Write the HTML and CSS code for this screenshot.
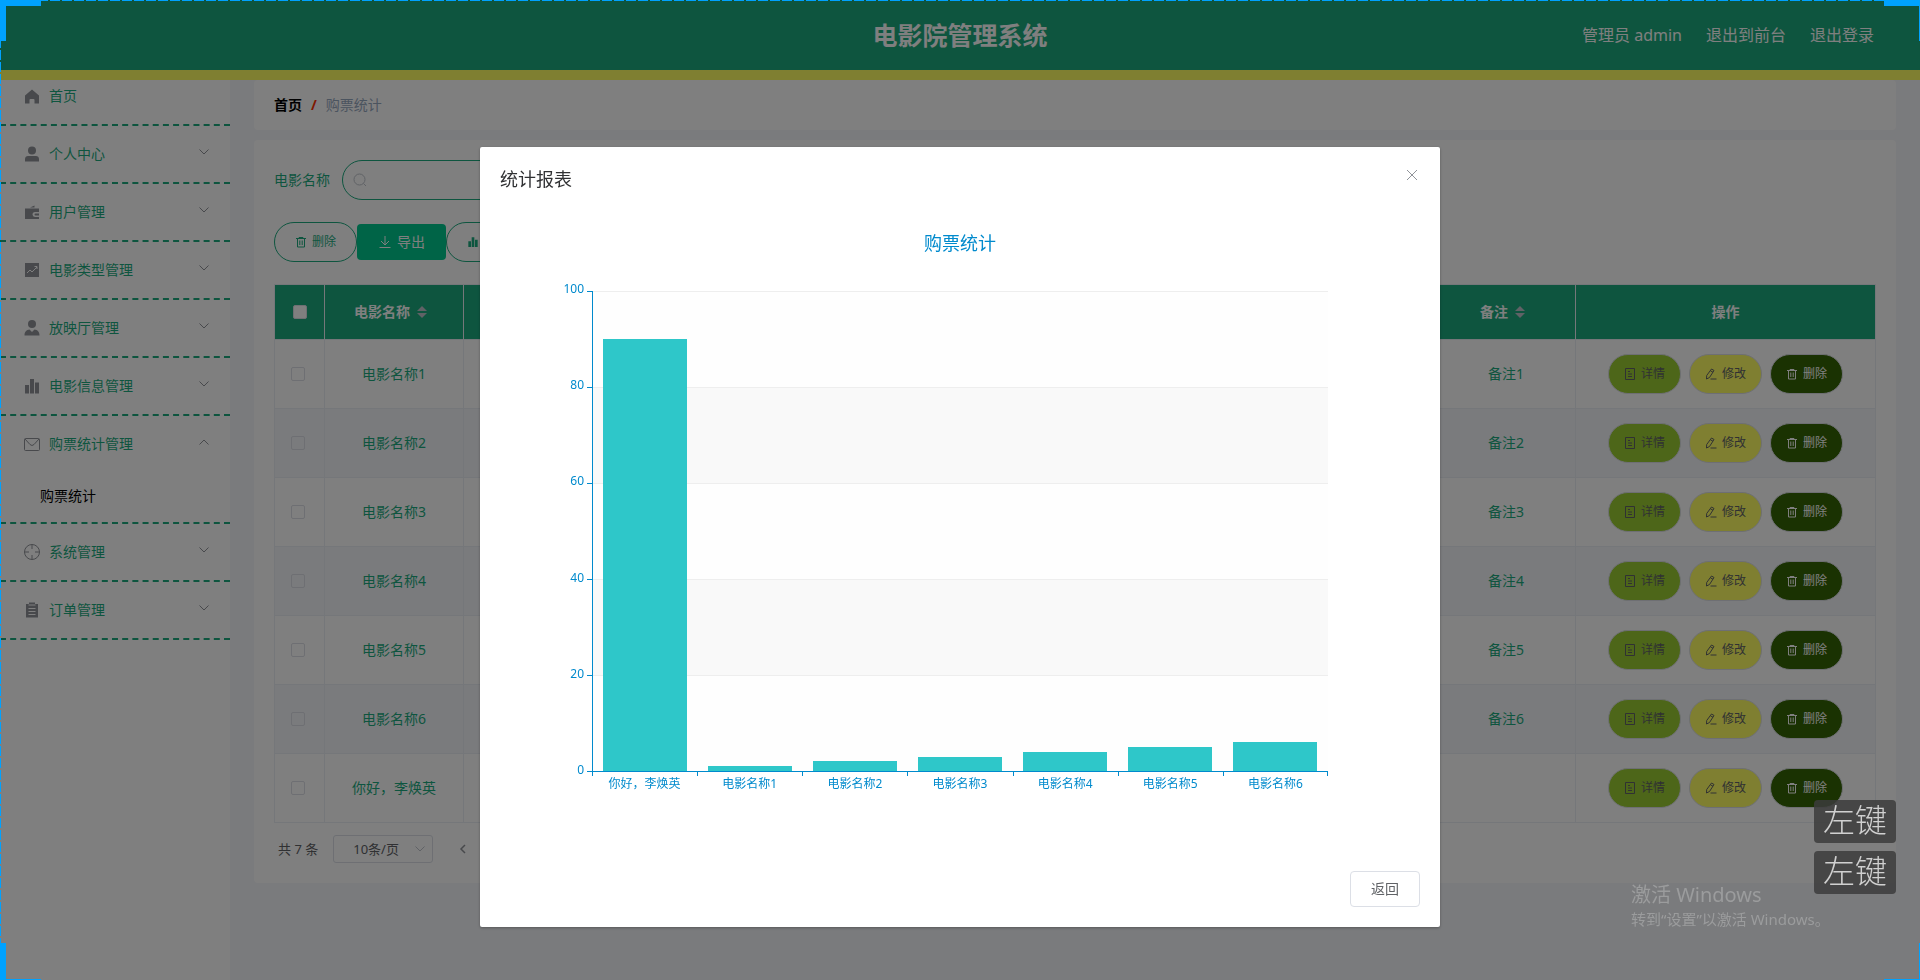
FILE: index.html
```html
<!DOCTYPE html>
<html lang="zh-CN">
<head>
<meta charset="utf-8">
<title>电影院管理系统</title>
<link rel="stylesheet" href="styles.css">
</head>
<body>
<svg class="sprite" aria-hidden="true">
  <symbol id="home" viewBox="0 0 18 18"><path d="M9 2.500 16 8.500v8h-4.500V13a1 1 0 0 0-1-1h-3a1 1 0 0 0-1 1v3.500H2v-8Z" fill="currentColor"/></symbol>
  <symbol id="user" viewBox="0 0 18 18"><circle cx="9" cy="5.500" r="4" fill="currentColor"/><path d="M2 16.500V14c0-2 1.300-3 3-3h8c1.700 0 3 1 3 3v2.500Z" fill="currentColor"/></symbol>
  <symbol id="wallet" viewBox="0 0 18 18"><path d="M7 4.500 11.500 2.500v2ZM2 5.500h14v3.500h-4a2.400 2.400 0 0 0 0 5h4v2H2Z" fill="currentColor"/><path d="M12.500 10.500H16v2h-3.500a1 1 0 0 1 0-2" fill="currentColor"/></symbol>
  <symbol id="trend" viewBox="0 0 18 18"><path d="M2 2h14v14H2Z" fill="currentColor"/><path d="m4 12 3-3 2 2 5-5M11.500 5.500h2.500V8" fill="none" stroke="#ffffff"/></symbol>
  <symbol id="person" viewBox="0 0 18 18"><circle cx="9" cy="5" r="4" fill="currentColor"/><path d="M1.500 16.500c0-4 2-5.500 5-6L9 13l2.500-2.500c3 .5 5 2 5 6Z" fill="currentColor"/></symbol>
  <symbol id="bars" viewBox="0 0 18 18"><path d="M2 8h4v8.500H2ZM7 2h4v14.500H7ZM12 5.500h4v11h-4Z" fill="currentColor"/></symbol>
  <symbol id="mail" viewBox="0 0 18 18"><rect x="1.500" y="3.500" width="15" height="12" rx="1" fill="none" stroke="currentColor"/><path d="M2 4l5 5.500a2.800 2.800 0 0 0 4 0L16 4" fill="none" stroke="currentColor"/></symbol>
  <symbol id="aim" viewBox="0 0 18 18"><circle cx="9" cy="9" r="7.500" fill="none" stroke="currentColor"/><path d="M9 1.500V6M9 12v4.500M1.500 9H6M12 9h4.500" stroke="currentColor"/></symbol>
  <symbol id="order" viewBox="0 0 18 18"><path d="M3 3h3V1.500h6V3h3v13.500H3Z" fill="currentColor"/><path d="M5.500 4h7M5.500 7.500h7M5.500 10.500h7M5.500 13.500h7" stroke="#ffffff"/></symbol>
  <symbol id="down" viewBox="0 0 12 12"><path d="m1.500 3.500 4.500 4.500 4.500-4.500" fill="none" stroke="currentColor"/></symbol>
  <symbol id="up" viewBox="0 0 12 12"><path d="m1.500 8.500 4.500-4.500 4.500 4.500" fill="none" stroke="currentColor"/></symbol>
  <symbol id="left" viewBox="0 0 12 12"><path d="M8 2 4 6l4 4" fill="none" stroke="currentColor" stroke-width="1.500"/></symbol>
  <symbol id="search" viewBox="0 0 14 14"><circle cx="6.500" cy="6.500" r="5.500" fill="none" stroke="currentColor"/><path d="m10.500 10.500 2.500 2.500" stroke="currentColor"/></symbol>
  <symbol id="trash" viewBox="0 0 12 12"><path d="M1 2.500h10M4 2.500v-1h4v1M2.500 2.500v8.500h7V2.500M4.800 4.500v4.500M7.200 4.500v4.500" fill="none" stroke="currentColor"/></symbol>
  <symbol id="download" viewBox="0 0 14 14"><path d="M7 1v9M3 6l4 4 4-4M1.500 12.500h11" fill="none" stroke="currentColor"/></symbol>
  <symbol id="doc" viewBox="0 0 12 12"><path d="M1.500 .5h9v11h-9ZM4 3.500h2M4 6h4M4 8.500h4" fill="none" stroke="currentColor"/></symbol>
  <symbol id="edit" viewBox="0 0 12 12"><path d="M6.500 1 9 2.500 4.500 9.500l-3 1.500 .2-3.500ZM5.500 2.800l2.500 1.500M5.500 11h6" fill="none" stroke="currentColor"/></symbol>
  <symbol id="close" viewBox="0 0 16 16"><path d="m3 3 10 10M13 3 3 13" stroke="currentColor"/></symbol>
</svg>

<header class="topbar">
  <h1 class="topbar-title">电影院管理系统</h1>
  <nav class="topbar-links">
    <span>管理员 admin</span>
    <a href="#">退出到前台</a>
    <a href="#">退出登录</a>
  </nav>
</header>

<div class="layout">
  <aside class="sidebar">
    <ul class="menu">
      <li class="menu-item"><a class="menu-link" href="#"><svg class="menu-icon"><use href="#home"/></svg>首页</a></li>
      <li class="menu-item"><a class="menu-link" href="#"><svg class="menu-icon"><use href="#user"/></svg>个人中心<svg class="menu-arrow"><use href="#down"/></svg></a></li>
      <li class="menu-item"><a class="menu-link" href="#"><svg class="menu-icon"><use href="#wallet"/></svg>用户管理<svg class="menu-arrow"><use href="#down"/></svg></a></li>
      <li class="menu-item"><a class="menu-link" href="#"><svg class="menu-icon"><use href="#trend"/></svg>电影类型管理<svg class="menu-arrow"><use href="#down"/></svg></a></li>
      <li class="menu-item"><a class="menu-link" href="#"><svg class="menu-icon"><use href="#person"/></svg>放映厅管理<svg class="menu-arrow"><use href="#down"/></svg></a></li>
      <li class="menu-item"><a class="menu-link" href="#"><svg class="menu-icon"><use href="#bars"/></svg>电影信息管理<svg class="menu-arrow"><use href="#down"/></svg></a></li>
      <li class="menu-item"><a class="menu-link" href="#"><svg class="menu-icon"><use href="#mail"/></svg>购票统计管理<svg class="menu-arrow"><use href="#up"/></svg></a><a class="submenu-link" href="#">购票统计</a></li>
      <li class="menu-item"><a class="menu-link" href="#"><svg class="menu-icon"><use href="#aim"/></svg>系统管理<svg class="menu-arrow"><use href="#down"/></svg></a></li>
      <li class="menu-item"><a class="menu-link" href="#"><svg class="menu-icon"><use href="#order"/></svg>订单管理<svg class="menu-arrow"><use href="#down"/></svg></a></li>
    </ul>
  </aside>

  <main class="main">
    <nav class="card breadcrumb"><a class="crumb-home" href="#">首页</a><span class="crumb-sep">/</span><span class="crumb-current">购票统计</span></nav>
    <section class="card content">
      <div class="search">
        <label for="film-name">电影名称</label>
        <span class="search-box"><svg class="icon-14"><use href="#search"/></svg><input id="film-name" type="text"></span>
      </div>
      <div class="toolbar">
        <button class="pill pill-outline" type="button"><svg class="icon-12"><use href="#trash"/></svg>删除</button>
        <button class="export" type="button"><svg class="icon-14"><use href="#download"/></svg>导出</button>
        <button class="pill pill-outline pill-chart" type="button" aria-label="报表"><svg class="icon-12"><use href="#bars"/></svg></button>
      </div>
      <table class="grid">
        <colgroup><col class="col-check"><col><col span="7"><col><col class="col-actions"></colgroup>
        <thead>
          <tr><th><input type="checkbox" aria-label="全选"></th><th><span class="sortable">电影名称<span class="carets"></span></span></th><th colspan="7"></th><th><span class="sortable">备注<span class="carets"></span></span></th><th>操作</th></tr>
        </thead>
        <tbody>
          <tr><td><input type="checkbox" aria-label="选择电影名称1"></td><td>电影名称1</td><td colspan="7"></td><td>备注1</td><td><div class="actions"><button class="pill pill-view" type="button"><svg class="icon-12"><use href="#doc"/></svg>详情</button><button class="pill pill-edit" type="button"><svg class="icon-12"><use href="#edit"/></svg>修改</button><button class="pill pill-delete" type="button"><svg class="icon-12"><use href="#trash"/></svg>删除</button></div></td></tr>
          <tr><td><input type="checkbox" aria-label="选择电影名称2"></td><td>电影名称2</td><td colspan="7"></td><td>备注2</td><td><div class="actions"><button class="pill pill-view" type="button"><svg class="icon-12"><use href="#doc"/></svg>详情</button><button class="pill pill-edit" type="button"><svg class="icon-12"><use href="#edit"/></svg>修改</button><button class="pill pill-delete" type="button"><svg class="icon-12"><use href="#trash"/></svg>删除</button></div></td></tr>
          <tr><td><input type="checkbox" aria-label="选择电影名称3"></td><td>电影名称3</td><td colspan="7"></td><td>备注3</td><td><div class="actions"><button class="pill pill-view" type="button"><svg class="icon-12"><use href="#doc"/></svg>详情</button><button class="pill pill-edit" type="button"><svg class="icon-12"><use href="#edit"/></svg>修改</button><button class="pill pill-delete" type="button"><svg class="icon-12"><use href="#trash"/></svg>删除</button></div></td></tr>
          <tr><td><input type="checkbox" aria-label="选择电影名称4"></td><td>电影名称4</td><td colspan="7"></td><td>备注4</td><td><div class="actions"><button class="pill pill-view" type="button"><svg class="icon-12"><use href="#doc"/></svg>详情</button><button class="pill pill-edit" type="button"><svg class="icon-12"><use href="#edit"/></svg>修改</button><button class="pill pill-delete" type="button"><svg class="icon-12"><use href="#trash"/></svg>删除</button></div></td></tr>
          <tr><td><input type="checkbox" aria-label="选择电影名称5"></td><td>电影名称5</td><td colspan="7"></td><td>备注5</td><td><div class="actions"><button class="pill pill-view" type="button"><svg class="icon-12"><use href="#doc"/></svg>详情</button><button class="pill pill-edit" type="button"><svg class="icon-12"><use href="#edit"/></svg>修改</button><button class="pill pill-delete" type="button"><svg class="icon-12"><use href="#trash"/></svg>删除</button></div></td></tr>
          <tr><td><input type="checkbox" aria-label="选择电影名称6"></td><td>电影名称6</td><td colspan="7"></td><td>备注6</td><td><div class="actions"><button class="pill pill-view" type="button"><svg class="icon-12"><use href="#doc"/></svg>详情</button><button class="pill pill-edit" type="button"><svg class="icon-12"><use href="#edit"/></svg>修改</button><button class="pill pill-delete" type="button"><svg class="icon-12"><use href="#trash"/></svg>删除</button></div></td></tr>
          <tr><td><input type="checkbox" aria-label="选择你好，李焕英"></td><td>你好，李焕英</td><td colspan="7"></td><td></td><td><div class="actions"><button class="pill pill-view" type="button"><svg class="icon-12"><use href="#doc"/></svg>详情</button><button class="pill pill-edit" type="button"><svg class="icon-12"><use href="#edit"/></svg>修改</button><button class="pill pill-delete" type="button"><svg class="icon-12"><use href="#trash"/></svg>删除</button></div></td></tr>
        </tbody>
      </table>
      <div class="pagination">
        <span>共 7 条</span>
        <span class="page-size"><select aria-label="每页条数"><option>10条/页</option></select><svg class="icon-12"><use href="#down"/></svg></span>
        <button class="page-prev" type="button" aria-label="上一页"><svg class="icon-12"><use href="#left"/></svg></button>
      </div>
    </section>
  </main>
</div>

<div class="overlay">
  <section class="dialog" role="dialog" aria-labelledby="dialog-title">
    <header class="dialog-header">
      <h2 class="dialog-title" id="dialog-title">统计报表</h2>
      <button class="dialog-close" type="button" aria-label="关闭"><svg class="icon-16"><use href="#close"/></svg></button>
    </header>
    <div class="dialog-body">
      <div class="chart">
        <h3 class="chart-title">购票统计</h3>
        <ol class="y-axis"><li>100</li><li>80</li><li>60</li><li>40</li><li>20</li><li>0</li></ol>
        <div class="plot">
          <div class="bar" style="height:90%"></div>
          <div class="bar" style="height:1%"></div>
          <div class="bar" style="height:2%"></div>
          <div class="bar" style="height:3%"></div>
          <div class="bar" style="height:4%"></div>
          <div class="bar" style="height:5%"></div>
          <div class="bar" style="height:6%"></div>
        </div>
        <ol class="x-axis"><li>你好，李焕英</li><li>电影名称1</li><li>电影名称2</li><li>电影名称3</li><li>电影名称4</li><li>电影名称5</li><li>电影名称6</li></ol>
      </div>
    </div>
    <footer class="dialog-footer"><button class="back" type="button">返回</button></footer>
  </section>
</div>

<div class="watermark"><p class="watermark-title">激活 Windows</p><p class="watermark-text">转到“设置”以激活 Windows。</p></div>
<div class="keys"><span class="key">左键</span><span class="key">左键</span></div>
<div class="frame frame-top"></div>
<div class="frame frame-left"></div>
<div class="frame corner-tl"></div>
<div class="frame corner-tr"></div>
<div class="frame corner-bl"></div>
<div class="frame corner-br"></div>
</body>
</html>
```
FILE: styles.css
```css
:root {
  --green: #1cab7f;
  --line: #ebeef5;
  --axis: #008acd;
  --frame: #00a2ff;
}

* { box-sizing: border-box; }

body {
  margin: 0;
  height: 100vh;
  overflow: hidden;
  display: flex;
  flex-direction: column;
  background: #f5f7fa;
  color: #606266;
  font: 14px/20px "Noto Sans", "Noto Sans CJK SC", sans-serif;
}

h1, h2, h3, p, ul, ol { margin: 0; padding: 0; list-style: none; font-weight: 400; }
a { color: inherit; text-decoration: none; }
button, input, select { font: inherit; color: inherit; }
svg { flex: none; }
.sprite { position: absolute; width: 0; height: 0; }
.icon-12 { width: 12px; height: 12px; }
.icon-14 { width: 14px; height: 14px; }
.icon-16 { width: 16px; height: 16px; display: block; }

/* top bar */
.topbar {
  position: relative;
  z-index: 1;
  display: grid;
  grid-template-columns: 1fr auto 1fr;
  align-items: center;
  height: 80px;
  padding: 0 46px;
  background: var(--green);
  border-bottom: 10px solid #ffff63;
  color: #ffffff;
}
.topbar-title { grid-column: 2; font-size: 25px; line-height: 36px; font-weight: 700; }
.topbar-links { display: flex; justify-content: flex-end; gap: 24px; font-size: 16px; }

/* sidebar */
.layout { flex: 1; display: flex; min-height: 0; }
.sidebar { flex: none; width: 230px; background: #ffffff; }
.menu { margin-top: -12px; }
.menu-item { border-bottom: 2px dashed var(--green); color: var(--green); }
.menu-link { display: flex; align-items: center; height: 56px; padding: 0 20px; }
.menu-icon { width: 18px; height: 18px; margin: 0 8px 0 3px; color: #909399; }
.menu-arrow { width: 12px; height: 12px; margin: 0 0 4px auto; color: #909399; }
.submenu-link { display: block; padding: 0 40px; height: 50px; line-height: 48px; color: #000000; }

/* cards */
.main { flex: 1; min-width: 0; padding: 0 24px; }
.card { background: #ffffff; border-radius: 4px; padding: 20px; }
.breadcrumb { display: flex; align-items: center; gap: 9px; height: 50px; margin-bottom: 10px; }
.crumb-home { color: #000000; font-weight: 700; }
.crumb-sep { color: #ff3300; font-weight: 700; }
.crumb-current { color: #97a8be; }

.search { display: flex; align-items: center; gap: 12px; color: var(--green); }
.search-box {
  display: flex; align-items: center; gap: 8px;
  width: 200px; height: 40px; padding: 0 10px;
  border: 1px solid var(--green); border-radius: 20px; color: #c0c4cc;
}
.search-box input { flex: 1; min-width: 0; border: 0; outline: 0; background: none; }

.toolbar { display: flex; align-items: center; margin: 22px 0; }
.pill {
  display: inline-flex; align-items: center; gap: 5px;
  height: 40px; padding: 0 15px;
  border: 1px solid #dcdfe6; border-radius: 20px;
  font-size: 12px; line-height: 16px;
}
.pill-outline { padding: 0 20px; background: #ffffff; border-color: var(--green); color: var(--green); }
.pill-chart { width: 83px; }
.pill-view { background: #9acd32; color: #606266; }
.pill-edit { background: #ffff63; color: #606266; }
.pill-delete { background: #356405; color: #ffffff; }
.export {
  display: inline-flex; align-items: center; gap: 5px;
  height: 36px; padding: 0 21px;
  border: 0; border-radius: 4px; background: #00c88f; color: #ffffff;
}

/* table */
.grid {
  width: 100%;
  table-layout: fixed;
  border-collapse: separate;
  border-spacing: 0;
  border: 1px solid var(--line);
  border-width: 1px 0 0 1px;
  color: var(--green);
  text-align: center;
}
.col-check { width: 50px; }
.col-actions { width: 300px; }
.grid th, .grid td { padding: 0; border: 1px solid var(--line); border-width: 0 1px 1px 0; }
.grid th { height: 55px; background: var(--green); color: #ffffff; font-weight: 700; }
.grid td { height: 69px; }
.grid tbody tr:nth-child(even) { background: #f5f7fa; }
.grid input {
  appearance: none;
  display: block;
  width: 14px; height: 14px; margin: 0 auto;
  border: 1px solid #dcdfe6; border-radius: 2px; background: #ffffff;
}
.grid td input { margin-left: 16px; background: none; }
.sortable { display: inline-flex; align-items: center; gap: 7px; padding-right: 7px; }
.carets { display: grid; gap: 2px; }
.carets::before, .carets::after { content: ""; border: 5px solid transparent; }
.carets::before { border-top: 0; border-bottom-color: #c0c4cc; }
.carets::after { border-bottom: 0; border-top-color: #c0c4cc; }
.actions { display: flex; justify-content: center; gap: 8px; }

.pagination { display: flex; align-items: center; gap: 15px; margin-top: 12px; padding-left: 4px; font-size: 13px; }
.page-size { display: flex; align-items: center; width: 100px; height: 28px; border: 1px solid #dcdfe6; border-radius: 3px; color: #c0c4cc; }
.page-size select { flex: 1; min-width: 0; appearance: none; padding: 0 0 0 19px; border: 0; background: none; color: #606266; }
.page-size svg { margin-right: 6px; }
.page-prev { display: flex; margin-left: 3px; padding: 6px; border: 0; background: none; color: #909399; }

/* dialog */
.overlay { position: fixed; inset: 0; z-index: 2; background: rgba(0, 0, 0, 0.5); }
.dialog { width: 50%; margin: 15vh auto 0; background: #ffffff; border-radius: 2px; box-shadow: 0 1px 3px rgba(0, 0, 0, 0.3); }
.dialog-header { display: flex; align-items: center; justify-content: space-between; padding: 20px 20px 10px; }
.dialog-title { color: #303133; font-size: 18px; line-height: 24px; }
.dialog-close { align-self: flex-start; padding: 0; border: 0; background: none; color: #909399; }
.dialog-body { padding: 30px 20px; }
.dialog-footer { display: flex; justify-content: flex-end; padding: 10px 20px 20px; }
.back { height: 36px; padding: 0 20px; border: 1px solid #dcdfe6; border-radius: 4px; background: #ffffff; color: #606266; }

/* chart */
.chart {
  display: grid;
  grid-template: 60px 480px 60px / 10% 80%;
  color: var(--axis);
  font-size: 12px;
  line-height: 16px;
}
.chart-title { grid-column: 1 / 4; justify-self: center; width: 100%; font-size: 18px; line-height: 24px; text-align: center; }
.y-axis { display: flex; flex-direction: column; justify-content: space-between; margin: -10px 0 -7px; text-align: right; }
.y-axis li { padding-right: 8px; }
.plot {
  position: relative;
  grid-column: 2;
  display: flex;
  align-items: flex-end;
  justify-content: space-around;
  background:
    linear-gradient(#eeeeee 1px, transparent 1px) 0 0 / 100% 96px,
    linear-gradient(#fefefe 50%, #f9f9f9 50%) 0 0 / 100% 192px;
}
/* axis line with ticks */
.plot::before {
  content: "";
  position: absolute;
  inset: 0 auto -1px -5px;
  width: 6px;
  background:
    linear-gradient(var(--axis), var(--axis)) 100% 0 / 1px 100% no-repeat,
    linear-gradient(var(--axis) 1px, transparent 1px) 0 0 / 100% 96px;
}
.bar { width: 11.43%; background: #2ec7c9; }
.x-axis { grid-column: 2; display: grid; grid-template-columns: repeat(7, 1fr); border-top: 1px solid var(--axis); text-align: center; }
.x-axis li {
  padding-top: 4px;
  background: linear-gradient(var(--axis), var(--axis)) 0 0 / 1px 4px no-repeat;
}
.x-axis li:last-child {
  background:
    linear-gradient(var(--axis), var(--axis)) 0 0 / 1px 4px no-repeat,
    linear-gradient(var(--axis), var(--axis)) 100% 0 / 1px 4px no-repeat;
}

/* desktop overlays */
.watermark { position: fixed; z-index: 3; right: 94px; bottom: 51px; width: 195px; color: #9b9c9d; white-space: nowrap; }
.watermark-title { font-size: 20px; line-height: 28px; }
.watermark-text { font-size: 15px; line-height: 20px; }
.keys { position: fixed; z-index: 3; right: 24px; bottom: 86px; display: grid; gap: 8px; }
.key {
  padding: 0 9px;
  border-radius: 4px;
  background: rgba(60, 60, 60, 0.85);
  color: #d0d0d0;
  font: 300 32px/43px "Liberation Serif", "Noto Sans CJK SC", serif;
}
.frame { position: fixed; z-index: 4; }
.frame-top { inset: 0 0 auto; height: 1px; background: repeating-linear-gradient(90deg, transparent 0 2px, var(--frame) 2px 12px); }
.frame-left { inset: 0 auto 0 0; width: 1px; background: repeating-linear-gradient(transparent 0 2px, var(--frame) 2px 12px); }
.corner-tl { top: 0; left: 0; width: 41px; height: 41px; border: solid var(--frame); border-width: 6px 0 0 6px; }
.corner-tr { top: 0; right: 0; width: 36px; height: 41px; border: solid var(--frame); border-width: 6px 1px 0 0; }
.corner-bl { bottom: 0; left: 0; width: 41px; height: 37px; border: solid var(--frame); border-width: 0 0 1px 6px; }
.corner-br { bottom: 0; right: 0; width: 36px; height: 37px; border: solid var(--frame); border-width: 0 1px 1px 0; }
```
